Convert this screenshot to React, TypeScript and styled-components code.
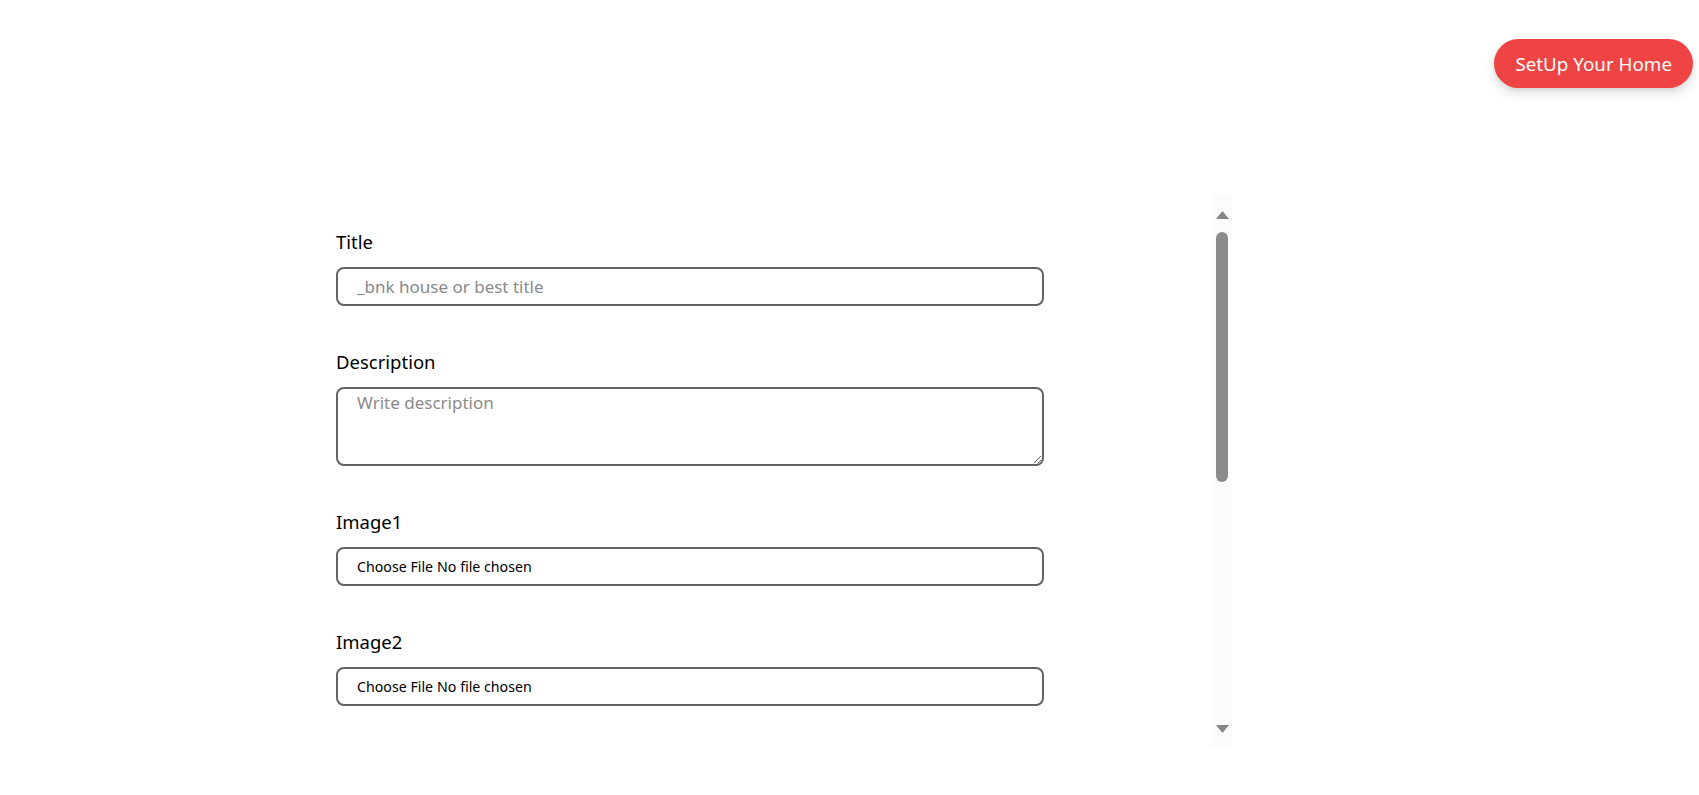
import React from "react";
import styled, { createGlobalStyle } from "styled-components";

const GlobalStyle = createGlobalStyle`
  html, body {
    margin: 0;
    padding: 0;
    background: #ffffff;
  }
  body {
    font-family: "Noto Sans", "Open Sans", Arial, sans-serif;
    color: #000;
  }
  * { box-sizing: border-box; }
`;

const Page = styled.div`
  min-height: 795px;
  display: flex;
  flex-direction: column;
`;

const Header = styled.header`
  display: flex;
  justify-content: flex-end;
  padding: 39px 6px 0 0;
`;

const SetupButton = styled.button`
  height: 49px;
  padding: 0 21px;
  border: none;
  border-radius: 999px;
  background: #ef4444;
  color: #ffffff;
  font-family: "Noto Sans", Arial, sans-serif;
  font-size: 18.8px;
  box-shadow: 0 6px 12px rgba(0, 0, 0, 0.12), 0 2px 4px rgba(0, 0, 0, 0.06);
  cursor: pointer;
`;

const Main = styled.main`
  display: flex;
  padding-top: 107px;
  padding-left: 316px;
`;

const FormPanel = styled.div`
  width: 896px;
  height: 552px;
  overflow: hidden;
  padding: 35px 20px 0 20px;
`;

const Scrollbar = styled.div`
  width: 20px;
  height: 552px;
  background: #fbfbfb;
  display: flex;
  flex-direction: column;
  align-items: center;
`;

const ArrowButton = styled.div<{ $top: number }>`
  height: 36px;
  width: 100%;
  display: flex;
  justify-content: center;
  align-items: flex-start;
  padding-top: ${(p) => p.$top}px;
  flex: none;
`;

const Track = styled.div`
  flex: 1;
  width: 100%;
  display: flex;
  justify-content: center;
  align-items: flex-start;
  padding-top: 1px;
`;

const Thumb = styled.div`
  width: 12px;
  height: 250px;
  border-radius: 6px;
  background: #8b8b8b;
`;

const Form = styled.form`
  display: flex;
  flex-direction: column;
  gap: 44px;
`;

const Field = styled.div`
  display: flex;
  flex-direction: column;
  gap: 13px;
`;

const Label = styled.label`
  font-size: 18.5px;
  line-height: 24px;
  color: #000;
`;

const boxBase = `
  width: 708px;
  border: 2px solid #636363;
  border-radius: 8px;
  background: #fff;
  font-family: "Noto Sans", Arial, sans-serif;
  outline: none;
`;

const TextInput = styled.input`
  ${boxBase}
  height: 39px;
  padding: 0 19px;
  font-size: 17px;
  color: #000;
  &::placeholder {
    color: #8a8a8a;
  }
`;

const TextArea = styled.textarea`
  ${boxBase}
  height: 79px;
  padding: 2px 19px;
  font-size: 17px;
  line-height: 23px;
  resize: vertical;
  color: #000;
  &::placeholder {
    color: #8a8a8a;
  }
`;

const FileBox = styled.label`
  ${boxBase}
  height: 39px;
  padding: 0 19px;
  display: flex;
  align-items: center;
  gap: 4px;
  font-size: 14.2px;
  color: #000;
  cursor: pointer;
`;

const HiddenFile = styled.input`
  display: none;
`;

const FileButtonText = styled.span``;
const FileStatus = styled.span``;

type FieldDef =
  | { label: string; kind: "text"; placeholder: string }
  | { label: string; kind: "textarea"; placeholder: string }
  | { label: string; kind: "file" };

const fields: FieldDef[] = [
  { label: "Title", kind: "text", placeholder: "_bnk house or best title" },
  { label: "Description", kind: "textarea", placeholder: "Write description" },
  { label: "Image1", kind: "file" },
  { label: "Image2", kind: "file" },
];

const UpArrow = () => (
  <svg width="13" height="8" viewBox="0 0 13 8">
    <polygon points="6.5,0 13,8 0,8" fill="#858585" />
  </svg>
);

const DownArrow = () => (
  <svg width="13" height="8" viewBox="0 0 13 8">
    <polygon points="0,0 13,0 6.5,8" fill="#858585" />
  </svg>
);

export default function App() {
  return (
    <>
      <GlobalStyle />
      <Page>
        <Header>
          <SetupButton type="button">SetUp Your Home</SetupButton>
        </Header>
        <Main>
          <FormPanel>
            <Form onSubmit={(e) => e.preventDefault()}>
              {fields.map((f, i) => {
                const id = `field-${i}`;
                return (
                  <Field key={f.label}>
                    <Label htmlFor={id}>{f.label}</Label>
                    {f.kind === "text" && <TextInput id={id} type="text" placeholder={f.placeholder} />}
                    {f.kind === "textarea" && <TextArea id={id} placeholder={f.placeholder} />}
                    {f.kind === "file" && (
                      <FileBox htmlFor={id}>
                        <HiddenFile id={id} type="file" accept="image/*" />
                        <FileButtonText>Choose File</FileButtonText>
                        <FileStatus>No file chosen</FileStatus>
                      </FileBox>
                    )}
                  </Field>
                );
              })}
            </Form>
          </FormPanel>
          <Scrollbar aria-hidden="true">
            <ArrowButton $top={16}>
              <UpArrow />
            </ArrowButton>
            <Track>
              <Thumb />
            </Track>
            <ArrowButton $top={14}>
              <DownArrow />
            </ArrowButton>
          </Scrollbar>
        </Main>
      </Page>
    </>
  );
}
